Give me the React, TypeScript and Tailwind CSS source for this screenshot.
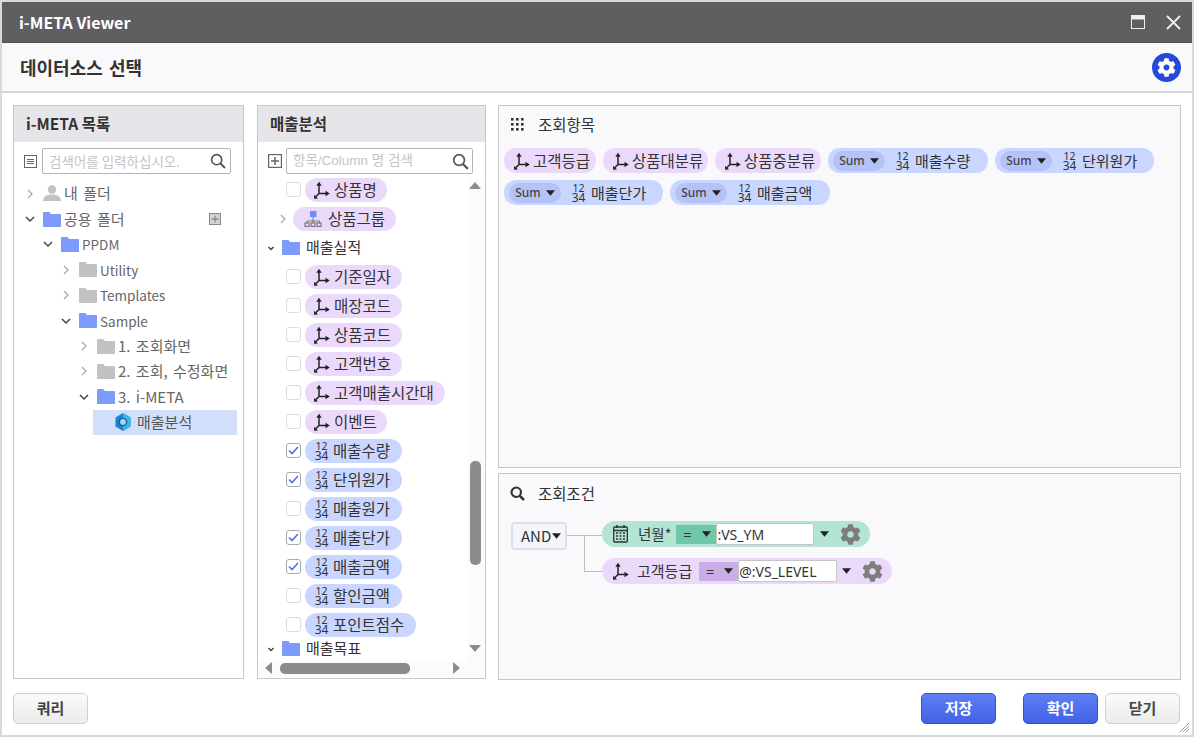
import React from "react";
import { FaCog } from "react-icons/fa";

const Axis = ({ c = "#222" }: { c?: string }) => (
  <svg width="16" height="18" viewBox="0 0 16 18" fill="none" stroke={c} strokeWidth="1.5" className="shrink-0">
    <path d="M5 12.500V3M5 12.500h8M5 12.500l-3.300 3.300" />
    <path d="M2.300 4.800 5 .8l2.700 4z" fill={c} stroke="none" />
    <path d="M11.500 9.800 15.800 12.500l-4.300 2.700z" fill={c} stroke="none" />
    <path d="M.2 13.800 0 17.800l4-.3z" fill={c} stroke="none" />
  </svg>
);

const Hier = () => (
  <svg width="18" height="16" viewBox="0 0 18 16" fill="none" className="shrink-0">
    <rect x="6" y="0" width="6.500" height="6" fill="#6f8ef5" />
    <path d="M9 6v4M3 12v-2h12.500v2M9 10v2" stroke="#777" strokeWidth="1" />
    <rect x="1" y="12" width="4" height="3.400" fill="none" stroke="#666" />
    <rect x="7" y="12" width="4" height="3.400" fill="none" stroke="#666" />
    <rect x="13" y="12" width="4" height="3.400" fill="none" stroke="#666" />
  </svg>
);

const Num = () => (
  <svg width="15" height="20" viewBox="0 0 15 20" fill="#333" className="shrink-0 overflow-visible font-['Noto_Sans','Liberation_Sans',sans-serif]">
    <text x="7.500" y="8.500" textAnchor="middle" fontSize="10.500">12</text>
    <text x="7.500" y="19" textAnchor="middle" fontSize="12">34</text>
  </svg>
);

const Folder = ({ gray = false }: { gray?: boolean }) => (
  <svg width="18" height="15" viewBox="0 0 18 15" className="shrink-0">
    <path d="M0 1.200C0 .5.5 0 1.200 0h5.200L8 2h9c.6 0 1 .4 1 1v11c0 .6-.4 1-1 1H1c-.6 0-1-.4-1-1z" fill={gray ? "#c2c2c2" : "#7c9bfa"} />
  </svg>
);

const Chev = ({ open, light = false }: { open: boolean; light?: boolean }) => (
  <svg width="10" height="10" viewBox="0 0 10 10" fill="none" stroke={open ? "#444" : "#aaa"} strokeWidth={open ? 1.5 : 1.3} className="shrink-0">
    {open ? <path d={light ? "M2.500 4 5 6.500 7.500 4" : "M1 3l4 4 4-4"} /> : <path d="M3 1l4 4-4 4" />}
  </svg>
);

const Mag = ({ s = 18, c = "#555", w = 1.8 }: { s?: number; c?: string; w?: number }) => (
  <svg width={s} height={s} viewBox="0 0 18 18" fill="none" stroke={c} strokeWidth={w} className="shrink-0">
    <circle cx="7.500" cy="7.500" r="5.700" />
    <path d="M11.800 11.800l5 5" strokeWidth={w + 0.5} />
  </svg>
);

const PlusBox = ({ s = 14, c = "#666" }: { s?: number; c?: string }) => (
  <svg width={s} height={s} viewBox="0 0 14 14" fill="none" stroke={c} strokeWidth="1.200" className="shrink-0">
    <rect x=".6" y=".6" width="12.800" height="12.800" />
    <path d="M7 3v8M3 7h8" strokeWidth="1.500" />
  </svg>
);

const Cube = () => (
  <svg width="16" height="18" viewBox="0 0 16 18" className="shrink-0">
    <path d="M8 0l7.500 4.400v9.200L8 18 .5 13.600V4.400z" fill="#1f7fd6" />
    <path d="M8 0l7.500 4.400v9.200L8 18z" fill="#38b6e8" />
    <circle cx="8" cy="9" r="3.600" fill="#9fd8f5" stroke="#14609f" strokeWidth="1.400" />
  </svg>
);

const Caret = ({ c = "#222", w = 9 }: { c?: string; w?: number }) => (
  <svg width={w} height="6" viewBox="0 0 10 6" className="shrink-0">
    <path d="M0 0h10L5 6z" fill={c} />
  </svg>
);

const Grid = () => (
  <svg width="13" height="13" viewBox="0 0 13 13" fill="#333" className="shrink-0">
    {[0, 5, 10].map((y) => [0, 5, 10].map((x) => <rect key={`${x}-${y}`} x={x} y={y} width="2.600" height="2.600" />))}
  </svg>
);

const Calendar = () => (
  <svg width="15" height="18" viewBox="0 0 15 18" fill="none" stroke="#333" className="shrink-0">
    <rect x=".7" y="2" width="13.600" height="15" strokeWidth="1.300" rx="1" />
    <path d="M4 0v3M11 0v3M1 5.500h13" strokeWidth="1.500" />
    <path d="M3 8h2M6.500 8h2M10 8h2M3 11h2M6.500 11h2M10 11h2M3 14h2M6.500 14h2M10 14h2" strokeWidth="1.500" />
  </svg>
);

const tree: { t: string; lv: number; open?: boolean; kind: "user" | "blue" | "gray" | "cube"; plus?: boolean; lat?: boolean }[] = [
  { t: "내 폴더", lv: 0, kind: "user" },
  { t: "공용 폴더", lv: 0, open: true, kind: "blue", plus: true },
  { t: "PPDM", lv: 1, open: true, kind: "blue", lat: true },
  { t: "Utility", lv: 2, kind: "gray", lat: true },
  { t: "Templates", lv: 2, kind: "gray", lat: true },
  { t: "Sample", lv: 2, open: true, kind: "blue", lat: true },
  { t: "1. 조회화면", lv: 3, kind: "gray" },
  { t: "2. 조회, 수정화면", lv: 3, kind: "gray" },
  { t: "3. i-META", lv: 3, open: true, kind: "blue" },
  { t: "매출분석", lv: 4, kind: "cube" },
];

const lvClass = ["pl-[11px]", "pl-[29px]", "pl-[47px]", "pl-[65px]"];

const TreeRow = ({ r }: { r: (typeof tree)[number] }) => {
  if (r.kind === "cube") {
    return (
      <div className="ml-[79px] mr-[6px] flex h-[25.4px] items-center gap-[6px] bg-[#d2dffa] pl-[22px] text-[#555]">
        <Cube />
        <span>{r.t}</span>
      </div>
    );
  }
  return (
    <div className={`relative flex h-[25.4px] items-center text-[#666] [word-spacing:2px] ${lvClass[r.lv]}`}>
      <span className="flex w-[18px] shrink-0 justify-start"><Chev open={!!r.open} /></span>
      {r.kind === "user" ? (
        <svg width="18" height="17" viewBox="0 0 18 17" fill="#c2c2c2" className="shrink-0">
          <circle cx="9" cy="4.500" r="4.200" />
          <path d="M0 16c0-4 3-6.500 9-6.500S18 12 18 16z" />
        </svg>
      ) : (
        <Folder gray={r.kind === "gray"} />
      )}
      <span className={`ml-[3px] whitespace-nowrap ${r.lat ? "text-[13.5px]" : ""}`}>{r.t}</span>
      {r.plus && (
        <span className="absolute right-[22px] top-[7px] flex h-[12px] w-[12px] items-center justify-center bg-[#d5d5d5]">
          <PlusBox s={12} c="#888" />
        </span>
      )}
    </div>
  );
};

const Pill = ({ t, kind, w }: { t: string; kind: "d" | "m"; w: string }) => (
  <span className={`flex h-[24px] items-center rounded-[12px] pl-[9px] text-[15.5px] text-[#333] ${kind === "d" ? "bg-[#ebd9fb]" : "bg-[#c9d6ff]"} ${w}`}>
    {kind === "d" ? <Axis /> : <Num />}
    <span className="ml-[4px] whitespace-nowrap">{t}</span>
  </span>
);

const Check = ({ on }: { on: boolean }) => (
  <span className={`flex h-[15px] w-[15px] shrink-0 items-center justify-center rounded-[3px] bg-white ${on ? "border-[1.5px] border-[#a8a8a8]" : "border border-[#dcdcdc]"}`}>
    {on && (
      <svg width="11" height="9" viewBox="0 0 11 9" fill="none" stroke="#4d6ff0" strokeWidth="1.600">
        <path d="M1 4.500 4 7.500 10 1" />
      </svg>
    )}
  </span>
);

const fields: { t: string; kind: "d" | "m"; on?: boolean; w: string }[] = [
  { t: "기준일자", kind: "d", w: "w-[97px]" },
  { t: "매장코드", kind: "d", w: "w-[97px]" },
  { t: "상품코드", kind: "d", w: "w-[97px]" },
  { t: "고객번호", kind: "d", w: "w-[97px]" },
  { t: "고객매출시간대", kind: "d", w: "w-[140px]" },
  { t: "이벤트", kind: "d", w: "w-[82px]" },
  { t: "매출수량", kind: "m", on: true, w: "w-[97px]" },
  { t: "단위원가", kind: "m", on: true, w: "w-[97px]" },
  { t: "매출원가", kind: "m", w: "w-[97px]" },
  { t: "매출단가", kind: "m", on: true, w: "w-[97px]" },
  { t: "매출금액", kind: "m", on: true, w: "w-[97px]" },
  { t: "할인금액", kind: "m", w: "w-[97px]" },
  { t: "포인트점수", kind: "m", w: "w-[111px]" },
];

const FieldRow = ({ children }: { children: React.ReactNode }) => (
  <div className="flex h-[29px] shrink-0 items-center gap-[4px] pl-[28px]">{children}</div>
);

const FolderRow = ({ t }: { t: string }) => (
  <div className="flex h-[29px] shrink-0 items-center pl-[8px] text-[#333]">
    <span className="flex w-[16px]"><Chev open light /></span>
    <Folder />
    <span className="ml-[6px]">{t}</span>
  </div>
);

const SelPill = ({ t, w }: { t: string; w: string }) => (
  <span className={`flex h-[25px] items-center rounded-[12px] bg-[#c9d6ff] pl-[5px] text-[#333] ${w}`}>
    <span className="flex h-[20px] w-[52px] items-center justify-center gap-[5px] rounded-[10px] bg-[#b5c2f8] font-['Noto_Sans',sans-serif] text-[12px] font-medium text-[#444]">
      Sum <Caret w={9} />
    </span>
    <span className="ml-[10px] flex"><Num /></span>
    <span className="ml-[5px] whitespace-nowrap">{t}</span>
  </span>
);

const TopPill = ({ t, w }: { t: string; w: string }) => (
  <span className={`flex h-[25px] items-center gap-[3px] rounded-[12px] bg-[#ebd9fb] pl-[10px] text-[15.5px] text-[#333] ${w}`}>
    <Axis />
    <span className="whitespace-nowrap">{t}</span>
  </span>
);

const Btn = ({ t, blue = false, cls = "" }: { t: string; blue?: boolean; cls?: string }) => (
  <button
    className={`flex h-[31px] w-[75px] items-center justify-center rounded-[5px] border text-[15px] font-bold ${
      blue ? "border-[#2f50d8] bg-gradient-to-b from-[#5f7ff5] to-[#4262e6] text-white" : "border-[#d0d0d0] bg-gradient-to-b from-[#fbfbfb] to-[#ebebeb] text-[#444]"
    } ${cls}`}
  >
    {t}
  </button>
);

const CondGear = () => <FaCog className="shrink-0 text-[#7d7d7d]" size={21} />;

export default function App() {
  return (
    <div className="flex h-[737px] w-[1194px] flex-col overflow-hidden border-2 border-[#d9d9d9] bg-white font-['Noto_Sans_CJK_KR','Noto_Sans',sans-serif] text-[15px]">
      <div className="flex h-[41px] shrink-0 items-center justify-between border-b border-[#505052] bg-[#5f5f61] pl-[17px] pr-[11px]">
        <span className="text-[16px] font-bold text-white">i-META Viewer</span>
        <div className="flex items-center gap-[21px]">
          <svg width="14" height="14" viewBox="0 0 14 14" className="shrink-0">
            <rect x=".5" y=".5" width="13" height="13" fill="#5f5f61" stroke="#f0f0f0" />
            <rect x="0" y="0" width="14" height="4.500" fill="#f0f0f0" />
          </svg>
          <svg width="15" height="15" viewBox="0 0 15 15" stroke="#f0f0f0" strokeWidth="1.800" className="shrink-0">
            <path d="M1 1l13 13M14 1L1 14" />
          </svg>
        </div>
      </div>
      <div className="flex h-[50px] shrink-0 items-center justify-between border-b-2 border-[#d6d6d6] bg-[#f9f9fb] pl-[18px] pr-[11px]">
        <span className="text-[18px] font-bold text-[#333] [word-spacing:2px]">데이터소스 선택</span>
        <span className="flex h-[29px] w-[29px] items-center justify-center rounded-full bg-[#2748d8]">
          <FaCog className="text-white" size={19} />
        </span>
      </div>

      <div className="flex min-h-0 flex-1 gap-[12px] pl-[11px] pr-[11px] pt-[12px]">
        {/* left */}
        <div className="flex h-[574px] w-[231px] shrink-0 flex-col border border-[#c6c6c6]">
          <div className="flex h-[36px] shrink-0 items-center bg-[#e6e6ea] pl-[12px] text-[15.5px] font-bold text-[#333]">i-META 목록</div>
          <div className="flex items-center gap-[5px] pl-[10px] pr-[12px] pt-[6px]">
            <svg width="13" height="13" viewBox="0 0 13 13" fill="none" stroke="#666" className="shrink-0">
              <rect x=".5" y=".5" width="12" height="12" />
              <path d="M3 4.500h7M3 6.500h7M3 8.500h7" />
            </svg>
            <div className="flex h-[26px] flex-1 items-center justify-between rounded-[2px] border border-[#b5b5b5] pl-[6px] pr-[4px]">
              <span className="text-[13.5px] text-[#c4c4c4]">검색어를 입력하십시오.</span>
              <Mag s={16} />
            </div>
          </div>
          <div className="flex flex-col pt-[7px]">
            {tree.map((r) => (
              <TreeRow key={r.t} r={r} />
            ))}
          </div>
        </div>

        {/* middle */}
        <div className="relative ml-[1px] flex h-[574px] w-[229px] shrink-0 flex-col overflow-hidden border border-[#c6c6c6]">
          <div className="flex h-[36px] shrink-0 items-center bg-[#e6e6ea] pl-[12px] text-[15.5px] font-bold text-[#333]">매출분석</div>
          <div className="flex items-center gap-[4px] pl-[10px] pr-[12px] pt-[6px]">
            <PlusBox s={14} />
            <div className="flex h-[26px] flex-1 items-center justify-between rounded-[2px] border border-[#b5b5b5] pl-[6px] pr-[3px]">
              <span className="whitespace-nowrap font-['Liberation_Sans','Noto_Sans_CJK_KR',sans-serif] text-[13.5px] text-[#c4c4c4]">항목/Column 명 검색</span>
              <Mag s={17} />
            </div>
          </div>
          <div className="flex min-h-0 flex-1 flex-col pt-[1px]">
            <div className="flex h-[29px] shrink-0 items-center gap-[4px] pl-[28px]">
              <Check on={false} />
              <Pill t="상품명" kind="d" w="w-[82px]" />
            </div>
            <div className="flex h-[29px] shrink-0 items-center pl-[20px]">
              <span className="flex w-[15px]"><Chev open={false} /></span>
              <span className="flex h-[24px] w-[103px] items-center gap-[6px] rounded-[12px] bg-[#ebd9fb] pl-[11px] text-[15.5px] text-[#333]">
                <Hier />
                상품그룹
              </span>
            </div>
            <FolderRow t="매출실적" />
            {fields.map((f) => (
              <FieldRow key={f.t}>
                <Check on={!!f.on} />
                <Pill t={f.t} kind={f.kind} w={f.w} />
              </FieldRow>
            ))}
            <div className="-mt-[5px]"><FolderRow t="매출목표" /></div>
          </div>
          {/* vertical scrollbar */}
          <div className="absolute bottom-[17px] right-[1px] top-[73px] w-[16px] bg-[#fbfbfb]">
            <svg width="12" height="7" viewBox="0 0 12 7" className="absolute left-[1px] top-[3px]"><path d="M0 7h12L6 0z" fill="#8c8c8c" /></svg>
            <div className="absolute left-[2px] top-[282px] h-[104px] w-[11px] rounded-[5px] bg-[#8c8c8c]" />
            <svg width="12" height="7" viewBox="0 0 12 7" className="absolute bottom-[9px] left-[1px]"><path d="M0 0h12L6 7z" fill="#8c8c8c" /></svg>
          </div>
          {/* horizontal scrollbar */}
          <div className="absolute bottom-[1px] left-[1px] right-[1px] h-[16px] bg-[#fbfbfb]">
            <svg width="7" height="12" viewBox="0 0 7 12" className="absolute left-[6px] top-[1px]"><path d="M7 0v12L0 6z" fill="#8c8c8c" /></svg>
            <div className="absolute left-[21px] top-[2px] h-[11px] w-[130px] rounded-[5px] bg-[#8c8c8c]" />
            <svg width="7" height="12" viewBox="0 0 7 12" className="absolute left-[194px] top-[1px]"><path d="M0 0v12l7-6z" fill="#8c8c8c" /></svg>
          </div>
        </div>

        {/* right */}
        <div className="flex h-[575px] min-w-0 flex-1 flex-col gap-[5px]">
          <div className="flex h-[363px] shrink-0 flex-col border border-[#c6c6c6] bg-[#f9f9fc]">
            <div className="flex items-center gap-[14px] pl-[12px] pt-[7px] text-[#333]">
              <Grid />
              <span className="text-[15.5px]">조회항목</span>
            </div>
            <div className="flex flex-wrap gap-x-[7px] gap-y-[7px] pl-[5px] pt-[12px]">
              <TopPill t="고객등급" w="w-[92px]" />
              <TopPill t="상품대분류" w="w-[105px]" />
              <TopPill t="상품중분류" w="w-[106px]" />
              <SelPill t="매출수량" w="w-[160px]" />
              <SelPill t="단위원가" w="w-[159px]" />
              <SelPill t="매출단가" w="w-[159px]" />
              <SelPill t="매출금액" w="w-[160px]" />
            </div>
          </div>
          <div className="flex flex-1 flex-col border border-[#c6c6c6] bg-[#f9f9fc]">
            <div className="flex items-center gap-[13px] pl-[11px] pt-[8px] text-[#333]">
              <Mag s={15} c="#333" w={2.6} />
              <span className="text-[15.5px]">조회조건</span>
            </div>
            <div className="flex pl-[12px] pt-[17px]">
              <div className="flex h-[28px] w-[56px] items-center justify-start gap-[1px] rounded-[4px] border-2 border-[#dce0ea] bg-[#f3f6fb] pl-[8px] text-[#333]">
                AND<Caret w={9} />
              </div>
              <div className="relative w-[35px] shrink-0">
                <span className="absolute left-0 top-[13px] h-[1px] w-[35px] bg-[#bdbdbd]" />
                <span className="absolute left-[17px] top-[13px] h-[37px] w-[18px] border-b border-l border-[#bdbdbd]" />
              </div>
              <div className="-mt-[1px] flex flex-col gap-[11px]">
                <div className="flex h-[26px] w-[268px] items-center rounded-[13px] bg-[#b4e4d3] pl-[11px] text-[#333]">
                  <Calendar />
                  <span className="ml-[10px] text-[14.5px]">년월*</span>
                  <span className="ml-[5px] flex h-[19px] w-[40px] items-center justify-between bg-[#6fc7a9] pl-[7px] pr-[5px] text-[14px]">= <Caret w={9} /></span>
                  <span className="flex h-[22px] w-[98px] items-center rounded-[2px] border border-[#c5c5c5] bg-white font-['Noto_Sans',sans-serif] text-[14px]">:VS_YM</span>
                  <span className="ml-[6px] flex"><Caret w={9} /></span>
                  <span className="ml-[11px] flex"><CondGear /></span>
                </div>
                <div className="flex h-[26px] w-[290px] items-center rounded-[13px] bg-[#ebd9fb] pl-[11px] text-[#333]">
                  <Axis />
                  <span className="ml-[8px] text-[15px]">고객등급</span>
                  <span className="ml-[7px] flex h-[19px] w-[39px] items-center justify-between bg-[#c9aee6] pl-[7px] pr-[5px] text-[14px]">= <Caret w={9} /></span>
                  <span className="flex h-[22px] w-[99px] items-center rounded-[2px] border border-[#c5c5c5] bg-white font-['Noto_Sans',sans-serif] text-[14px]">@:VS_LEVEL</span>
                  <span className="ml-[5px] flex"><Caret w={9} /></span>
                  <span className="ml-[11px] flex"><CondGear /></span>
                </div>
              </div>
            </div>
          </div>
        </div>
      </div>

      <div className="relative flex h-[55px] shrink-0 items-start justify-between pl-[11px] pr-[12px] pt-[13px]">
        <Btn t="쿼리" />
        <div className="flex">
          <Btn t="저장" blue />
          <Btn t="확인" blue cls="ml-[27px]" />
          <Btn t="닫기" cls="ml-[7px]" />
        </div>
        <svg width="9" height="9" viewBox="0 0 9 9" stroke="#999" className="absolute bottom-[3px] right-[3px]">
          <path d="M0 9l9-9M3 9l6-6M6 9l3-3" />
        </svg>
      </div>
    </div>
  );
}
